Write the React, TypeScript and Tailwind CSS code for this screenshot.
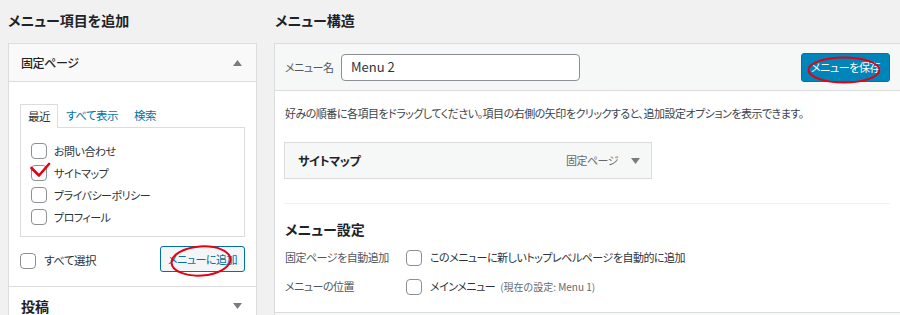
const Checkbox = () => (
	<span className="inline-block w-4 h-4 shrink-0 rounded-[4px] border border-[#8c8f94] bg-white" />
);

const Arrow = ({ up }: { up?: boolean }) => (
	<svg width="9" height="6" viewBox="0 0 9 6" className="shrink-0">
		{up ? (
			<polygon points="0,6 9,6 4.5,0" fill="#787c82" />
		) : (
			<polygon points="0,0 9,0 4.5,6" fill="#787c82" />
		)}
	</svg>
);

const pages = ['お問い合わせ', 'サイトマップ', 'プライバシーポリシー', 'プロフィール'];

const App = () => {
	return (
		<div className="w-[900px] h-[315px] overflow-hidden bg-[#f1f1f1] flex font-['Noto_Sans_CJK_JP','Noto_Sans',sans-serif] [font-feature-settings:'palt'] text-[#2c3338]">
			{/* メニュー項目を追加 */}
			<div className="w-[249px] ml-2 shrink-0">
				<h2 className="text-[14px] font-bold leading-[20px] pt-[10px] mb-[13px] text-[#1d2327]">
					メニュー項目を追加
				</h2>
				<div className="border border-[#dcdcde] bg-white">
					<div className="h-[38px] pl-3 pr-[14px] flex items-center justify-between bg-[#f9f9f9] border-b border-[#dcdcde]">
						<span className="text-[12px] tracking-[-0.4px] font-medium text-[#1d2327]">固定ページ</span>
						<Arrow up />
					</div>
					<div className="px-[11px] pt-[22px] pb-[14px] border-b border-[#dcdcde]">
						<div className="flex items-end text-[11.5px] tracking-[-0.5px] leading-[22px]">
							<div className="relative z-10 -mb-px px-[7px] border border-b-0 border-[#dcdcde] bg-white h-[24px] text-[#2c3338]">
								最近
							</div>
							<div className="px-[8px] text-[#0073aa] h-[23px]">すべて表示</div>
							<div className="px-[8px] text-[#0073aa] h-[23px]">検索</div>
						</div>
						<div className="border border-[#dcdcde] bg-white pl-[10px] pt-[12px] pb-[8px]">
							{pages.map((p, i) => (
								<div
									key={p}
									className="relative h-[22px] flex items-center gap-[7px] text-[11px] tracking-[-0.5px]"
								>
									<Checkbox />
									<span>{p}</span>
									{i === 1 && (
										<svg
											width="24"
											height="18"
											viewBox="0 0 24 18"
											className="absolute left-[-1px] top-[0px]"
										>
											<polyline
												points="1.5,6 9,13.5 19,2"
												fill="none"
												stroke="#e50012"
												strokeWidth="2.6"
												strokeLinecap="round"
												strokeLinejoin="round"
											/>
										</svg>
									)}
								</div>
							))}
						</div>
						<div className="mt-[9px] flex items-center justify-between">
							<div className="flex items-center gap-2 text-[11.5px] tracking-[-0.5px] mt-[3px]">
								<Checkbox />
								<span>すべて選択</span>
							</div>
							<div className="relative w-[85px] h-[26px] flex items-center justify-center rounded-[3px] border border-[#0071a1] bg-[#f3f5f6] text-[11px] tracking-[-0.5px] text-[#0071a1]">
								メニューに追加
								<svg
									width="62"
									height="32"
									viewBox="0 0 62 32"
									className="absolute left-[9px] top-[-2px]"
								>
									<ellipse
										cx="31"
										cy="16"
										rx="29.5"
										ry="14.5"
										transform="rotate(-4 31 16)"
										fill="none"
										stroke="#e50012"
										strokeWidth="2"
									/>
								</svg>
							</div>
						</div>
					</div>
					<div className="h-[38px] pl-3 pr-[14px] flex items-center justify-between bg-white">
						<span className="text-[14px] font-semibold text-[#1d2327]">投稿</span>
						<Arrow />
					</div>
				</div>
			</div>

			{/* メニュー構造 */}
			<div className="w-[627px] ml-[17px] shrink-0">
				<h2 className="text-[14px] font-bold leading-[20px] pt-[10px] mb-[13px] pl-px text-[#1d2327]">
					メニュー構造
				</h2>
				<div className="border border-[#dcdcde] bg-white h-[400px] flex flex-col">
					<div className="h-[47px] px-[10px] flex items-center bg-[#f6f7f7] border-b border-[#dcdcde]">
						<span className="w-[56px] text-[11px] tracking-[-0.5px] text-[#50575e]">メニュー名</span>
						<div className="w-[239px] h-[27px] flex items-center px-[9px] rounded-[4px] border border-[#8c8f94] bg-white text-[13px] text-[#2c3338]">
							Menu 2
						</div>
						<div className="relative ml-auto w-[89px] h-[29px] flex items-center justify-center rounded-[3px] border border-[#0073aa] bg-[#0085ba] text-[11px] tracking-[-0.4px] text-white">
							メニューを保存
							<svg
								width="74"
								height="28"
								viewBox="0 0 74 28"
								className="absolute left-[5px] top-[2px]"
							>
								<ellipse
									cx="37"
									cy="14"
									rx="35.5"
									ry="12.5"
									fill="none"
									stroke="#e50012"
									strokeWidth="2"
								/>
							</svg>
						</div>
					</div>
					<div className="px-[10px] pt-[13px] pb-[11px] bg-white">
						<p className="text-[11px] tracking-[-0.5px] leading-[18px] text-[#3c434a]">
							好みの順番に各項目をドラッグしてください。項目の右側の矢印をクリックすると、追加設定オプションを表示できます。
						</p>
						<div className="mt-[20px] -ml-px w-[368px] h-[37px] pl-[13px] pr-[11px] flex items-center border border-[#dcdcde] bg-[#f6f7f7]">
							<span className="text-[12px] tracking-[-0.4px] font-bold text-[#1d2327]">サイトマップ</span>
							<span className="ml-auto mr-[13px] text-[11px] tracking-[-0.5px] text-[#646970]">固定ページ</span>
							<Arrow />
						</div>
						<div className="mt-[24px] -ml-px border-t border-[#f0f0f1]" />
						<h3 className="mt-[15px] text-[14px] font-bold leading-[20px] text-[#1d2327]">
							メニュー設定
						</h3>
						<div className="mt-[4px] h-[29px] flex items-center text-[11px] tracking-[-0.5px]">
							<span className="w-[121px] text-[#50575e]">固定ページを自動追加</span>
							<Checkbox />
							<span className="ml-2 text-[#2c3338]">
								このメニューに新しいトップレベルページを自動的に追加
							</span>
						</div>
						<div className="h-[29px] flex items-center text-[11px] tracking-[-0.5px]">
							<span className="w-[121px] text-[#50575e]">メニューの位置</span>
							<Checkbox />
							<span className="ml-2 text-[#2c3338]">メインメニュー</span>
							<span className="ml-[5px] text-[10px] tracking-normal text-[#646970]">
								(現在の設定: Menu 1)
							</span>
						</div>
					</div>
					<div className="flex-1 border-t border-[#dcdcde] bg-[#f6f7f7]" />
				</div>
			</div>
		</div>
	);
};

export default App;
